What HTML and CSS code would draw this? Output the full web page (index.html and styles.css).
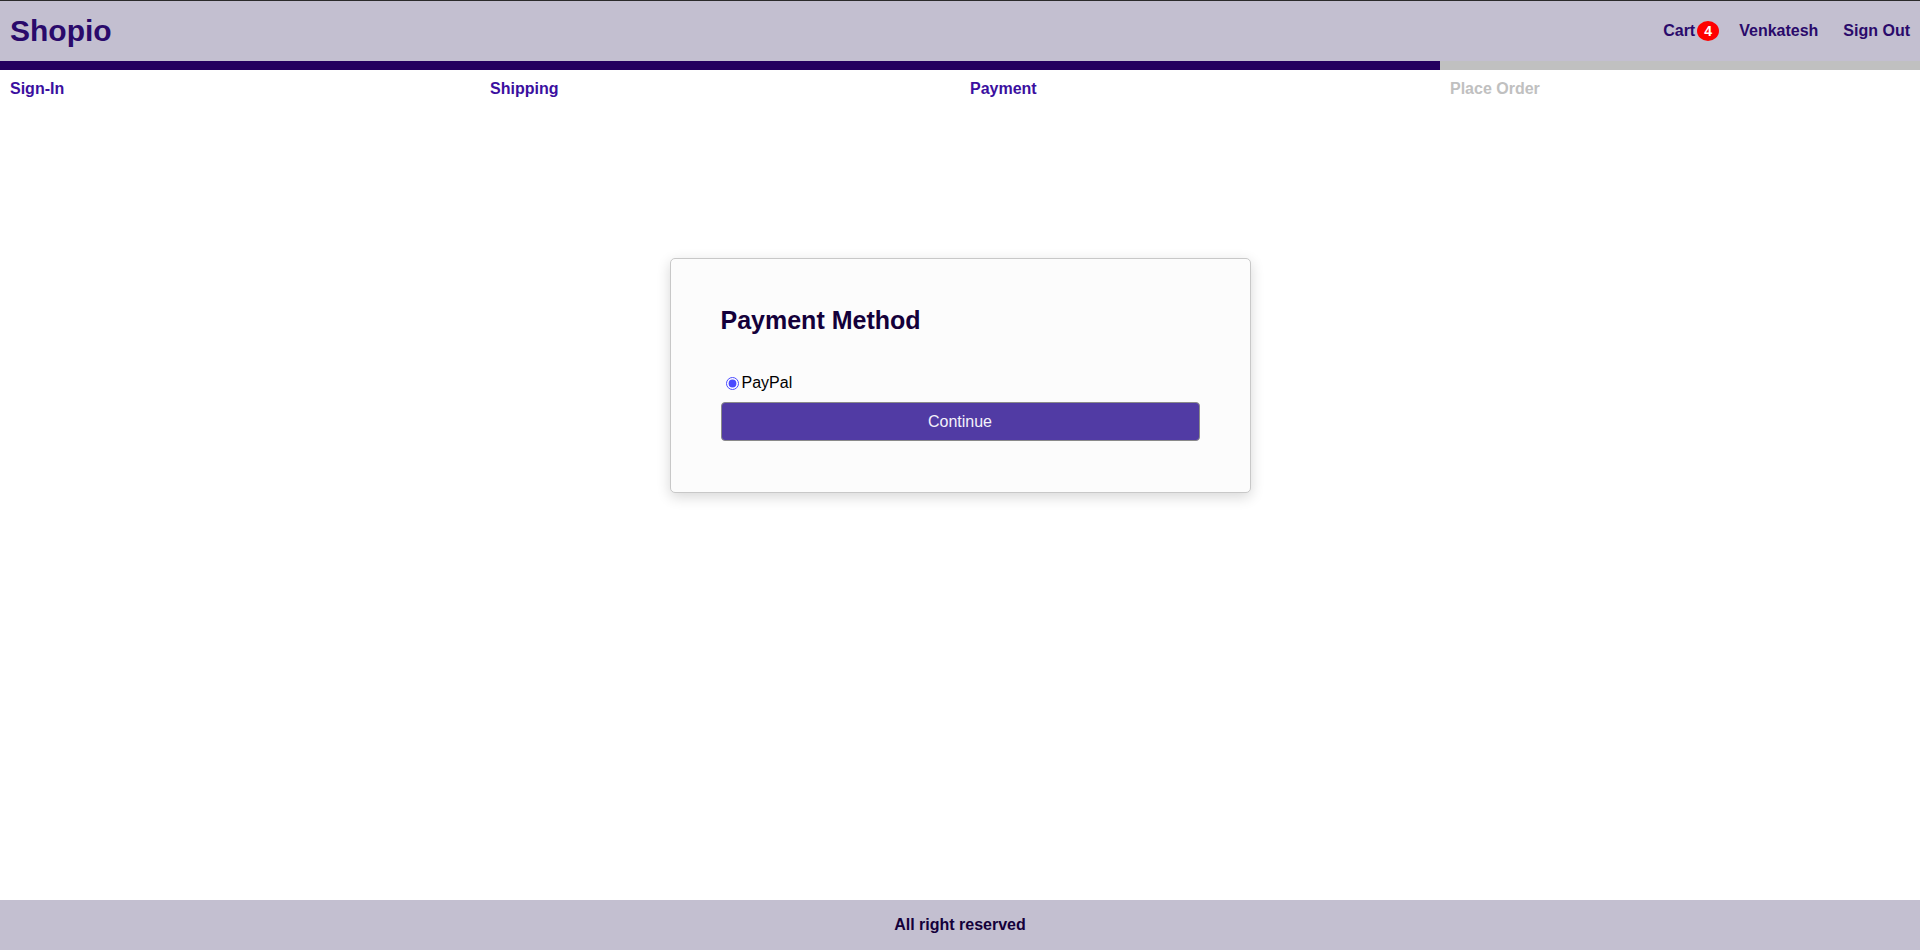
FILE: index.html
```html
<!DOCTYPE html>
<html lang="en">
<head>
<meta charset="utf-8">
<title>Shopio</title>
<link rel="stylesheet" href="styles.css">
</head>
<body>
<div class="page">
  <header class="header">
    <a class="brand" href="#">Shopio</a>
    <nav class="nav">
      <a class="nav-link" href="#">Cart<span class="badge">4</span></a>
      <a class="nav-link" href="#">Venkatesh</a>
      <a class="nav-link" href="#">Sign Out</a>
    </nav>
  </header>
  <main class="main">
    <div class="steps">
      <div class="step active">Sign-In</div>
      <div class="step active">Shipping</div>
      <div class="step active">Payment</div>
      <div class="step">Place Order</div>
    </div>
    <form class="card">
      <h1 class="card-title">Payment Method</h1>
      <div class="option">
        <input type="radio" id="paypal" name="method" checked>
        <label for="paypal">PayPal</label>
      </div>
      <button type="button" class="primary">Continue</button>
    </form>
  </main>
  <footer class="footer">All right reserved</footer>
</div>
</body>
</html>
```

FILE: styles.css
```css
* { box-sizing: border-box; }
html, body { margin: 0; padding: 0; }
body {
  font-family: "Liberation Sans", Arial, sans-serif;
  font-size: 16px;
  background: #ffffff;
}
.page {
  height: 950px;
  display: flex;
  flex-direction: column;
}
.header {
  height: 61px;
  border-top: 1px solid #2a2a2a;
  background: #c3bfd0;
  display: flex;
  align-items: center;
  justify-content: space-between;
  padding: 0 10px;
}
.brand {
  color: #2a0a6b;
  font-weight: bold;
  font-size: 30px;
  text-decoration: none;
}
.nav {
  display: flex;
  align-items: center;
  gap: 20px;
}
.nav-link {
  color: #2a0a6b;
  font-weight: bold;
  text-decoration: none;
  display: flex;
  align-items: center;
}
.nav-link:last-child { margin-left: 5px; }
.badge {
  background: #ff0000;
  color: #ffffff;
  border-radius: 50%;
  font-size: 14px;
  font-weight: bold;
  width: 22px;
  height: 20px;
  display: inline-flex;
  align-items: center;
  justify-content: center;
  margin-left: 2px;
}
.main {
  flex: 1;
  display: flex;
  flex-direction: column;
  align-items: center;
}
.steps {
  width: 100%;
  display: grid;
  grid-template-columns: repeat(4, 1fr);
}
.step {
  border-top: 9px solid #c0c0c0;
  color: #c0c0c0;
  font-weight: bold;
  padding: 10px 10px 8px;
  line-height: 18px;
}
.step.active {
  border-top-color: #24005e;
  color: #3b0fa0;
}
.card {
  margin-top: 152px;
  width: 581px;
  background: #fcfcfc;
  border: 1px solid #c8c8c8;
  border-radius: 5px;
  box-shadow: 0 4px 14px rgba(0, 0, 0, 0.16);
  padding: 46px 50px 51px;
  display: flex;
  flex-direction: column;
}
.card-title {
  margin: 0;
  font-size: 25px;
  line-height: 30px;
  color: #14003a;
}
.option {
  margin-top: 39px;
  height: 18px;
  display: flex;
  align-items: center;
  color: #000;
}
.option input {
  margin: 0 3px 0 5px;
  width: 13px;
  height: 13px;
  accent-color: #4a4aff;
}
.primary {
  margin-top: 10px;
  height: 39px;
  width: 100%;
  background: #513ba4;
  color: #f4f2fa;
  border: 1px solid #8a8a8a;
  border-radius: 4px;
  font-family: "Liberation Sans", Arial, sans-serif;
  font-size: 16px;
}
.footer {
  height: 50px;
  background: #c3bfd0;
  display: flex;
  align-items: center;
  justify-content: center;
  color: #14003a;
  font-weight: bold;
}
```
